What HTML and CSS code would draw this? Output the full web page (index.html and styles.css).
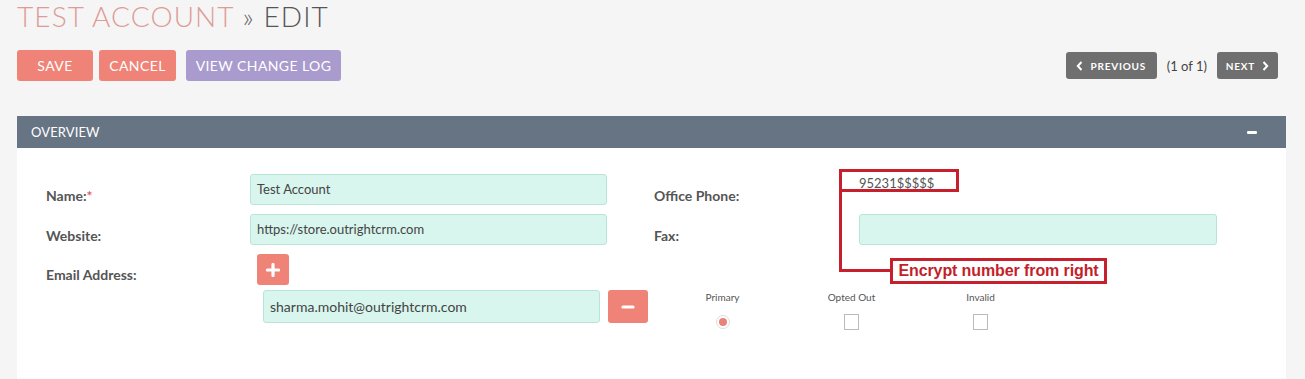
FILE: index.html
```html
<!DOCTYPE html>
<html>
<head>
<meta charset="utf-8">
<link rel="stylesheet" href="styles.css">
</head>
<body>
<div class="page">
  <h1 class="title"><span class="title-module">TEST ACCOUNT</span> <span class="title-sep">»</span> <span class="title-action">EDIT</span></h1>
  <div class="action-bar">
    <div class="actions">
      <button class="btn btn-save">SAVE</button>
      <button class="btn btn-cancel">CANCEL</button>
      <button class="btn btn-log">VIEW CHANGE LOG</button>
    </div>
    <div class="pager">
      <button class="nav-btn nav-prev"><svg width="7" height="10" viewBox="0 0 7 10"><path d="M5.5 1 L1.8 5 L5.5 9" fill="none" stroke="#fff" stroke-width="2"/></svg>PREVIOUS</button>
      <span class="pager-count">(1 of 1)</span>
      <button class="nav-btn nav-next">NEXT<svg width="7" height="10" viewBox="0 0 7 10"><path d="M1.5 1 L5.2 5 L1.5 9" fill="none" stroke="#fff" stroke-width="2"/></svg></button>
    </div>
  </div>

  <div class="panel">
    <div class="panel-head">
      <span class="panel-title">OVERVIEW</span>
      <span class="panel-toggle"></span>
    </div>
    <div class="panel-body">
      <div class="form-grid">
        <div class="label">Name:<span class="req">*</span></div>
        <div class="field"><div class="input">Test Account</div></div>
        <div></div>
        <div class="label">Office Phone:</div>
        <div class="field phone-cell">
          <div class="phone-value">95231$$$$$</div>
          <div class="note-box"></div>
          <div class="note-line"></div>
          <div class="note-text">Encrypt number from right</div>
        </div>

        <div class="label">Website:</div>
        <div class="field"><div class="input">https://store.outrightcrm.com</div></div>
        <div></div>
        <div class="label">Fax:</div>
        <div class="field"><div class="input"></div></div>

        <div class="label label-email">Email Address:</div>
        <div class="email-block">
          <button class="icon-btn add-btn"><svg width="14" height="14" viewBox="0 0 14 14"><path d="M7 1.5 V12.5 M1.5 7 H12.5" stroke="#fff" stroke-width="3.2" stroke-linecap="round"/></svg></button>
          <div class="email-line">
            <div class="input email-input">sharma.mohit@outrightcrm.com</div>
            <button class="icon-btn remove-btn"><svg width="14" height="6" viewBox="0 0 14 6"><path d="M2 3 H12" stroke="#fff" stroke-width="3.2" stroke-linecap="round"/></svg></button>
            <div class="flag flag-first">
              <div class="flag-label">Primary</div>
              <span class="radio"><span class="radio-dot"></span></span>
            </div>
            <div class="flag">
              <div class="flag-label">Opted Out</div>
              <span class="check"></span>
            </div>
            <div class="flag">
              <div class="flag-label">Invalid</div>
              <span class="check"></span>
            </div>
          </div>
        </div>
      </div>
    </div>
  </div>
</div>
</body>
</html>
```

FILE: styles.css
```css
html, body {
  margin: 0;
  padding: 0;
}
body {
  background: #f5f5f5;
  font-family: Lato, "Open Sans", sans-serif;
  color: #555;
  height: 379px;
  overflow: hidden;
}
.page {
  padding: 0 19px 0 17px;
}
.title {
  margin: 0;
  font-size: 28px;
  font-weight: 300;
  line-height: 33px;
  letter-spacing: 1.1px;
  white-space: nowrap;
}
.title-module { color: #de9c97; }
.title-sep { color: #666; }
.title-action { color: #555; }

.action-bar {
  display: flex;
  justify-content: space-between;
  align-items: center;
  margin-top: 17px;
  height: 31px;
}
.actions {
  display: flex;
  align-items: center;
}
.btn {
  border: none;
  height: 31px;
  border-radius: 3px;
  color: #fff;
  font-family: Lato, sans-serif;
  font-size: 14px;
  font-weight: 400;
  letter-spacing: 0.4px;
  padding: 0;
  cursor: pointer;
}
.btn-save { background: #f08377; width: 76px; }
.btn-cancel { background: #f08377; width: 77px; margin-left: 6px; }
.btn-log { background: #a99bcd; width: 155px; margin-left: 10px; }

.pager {
  display: flex;
  align-items: center;
  margin-right: 8px;
}
.nav-btn {
  border: none;
  background: #6f6f6f;
  color: #fff;
  height: 27px;
  border-radius: 3px;
  font-family: Lato, sans-serif;
  font-size: 10px;
  font-weight: 700;
  letter-spacing: 0.8px;
  display: flex;
  align-items: center;
  justify-content: center;
  gap: 7px;
  padding: 0;
}
.nav-prev { width: 91px; }
.nav-next { width: 61px; }
.pager-count {
  font-size: 13px;
  color: #444;
  margin: 0 10px;
  white-space: nowrap;
}

.panel {
  margin-top: 35px;
  width: 1269px;
}
.panel-head {
  background: #677483;
  height: 32px;
  display: flex;
  align-items: center;
  justify-content: space-between;
  padding: 0 29px 0 14px;
}
.panel-title {
  color: #fff;
  font-size: 13px;
  letter-spacing: 0.1px;
}
.panel-toggle {
  display: block;
  width: 10px;
  height: 3px;
  background: #fff;
  border-radius: 1px;
}
.panel-body {
  background: #fff;
  height: 240px;
  padding: 26px 0 0 29px;
  box-sizing: border-box;
}
.form-grid {
  display: grid;
  grid-template-columns: 204px 357px 47px 205px 358px;
  grid-auto-rows: auto;
  row-gap: 9px;
}
.label {
  font-size: 14px;
  font-weight: 700;
  color: #555;
  padding-top: 13px;
  line-height: 17px;
}
.req { color: #e0606a; }
.input {
  box-sizing: border-box;
  height: 31px;
  background: #d8f5ee;
  border: 1px solid #b8e5da;
  border-radius: 3px;
  font-size: 13px;
  color: #444;
  line-height: 29px;
  padding: 0 6px;
}
.phone-cell {
  position: relative;
}
.phone-value {
  font-size: 13px;
  color: #555;
  line-height: 18px;
}
.note-box {
  position: absolute;
  left: -20px;
  top: -5px;
  width: 120px;
  height: 23px;
  border: 3px solid #c81f2c;
  box-sizing: border-box;
}
.note-line {
  position: absolute;
  left: -20px;
  top: 18px;
  width: 51px;
  height: 80px;
  border-left: 3px solid #c81f2c;
  border-bottom: 3px solid #c81f2c;
  box-sizing: border-box;
}
.note-text {
  position: absolute;
  left: 31px;
  top: 84px;
  width: 217px;
  height: 26px;
  border: 3px solid #c81f2c;
  box-sizing: border-box;
  background: #fff;
  color: #c41e2b;
  font-family: "Liberation Sans", Arial, sans-serif;
  font-weight: 700;
  font-size: 16px;
  letter-spacing: -0.1px;
  line-height: 20px;
  text-align: center;
  white-space: nowrap;
}
.label-email {
  padding-top: 12px;
}
.email-block {
  grid-column: 2 / 6;
}
.icon-btn {
  border: none;
  background: #f08377;
  border-radius: 3px;
  display: flex;
  align-items: center;
  justify-content: center;
  padding: 0;
}
.add-btn {
  width: 32px;
  height: 31px;
  margin-left: 7px;
}
.email-line {
  display: flex;
  align-items: flex-start;
  margin-top: 5px;
}
.email-input {
  width: 337px;
  height: 33px;
  line-height: 31px;
  margin-left: 13px;
  font-size: 14px;
}
.remove-btn {
  width: 40px;
  height: 33px;
  margin-left: 8px;
}
.flag {
  width: 129px;
  display: flex;
  flex-direction: column;
  align-items: center;
}
.flag-first { margin-left: 10px; }
.flag-label {
  font-size: 10px;
  color: #555;
  line-height: 12px;
  margin-top: 1px;
}
.radio {
  margin-top: 12px;
  width: 14px;
  height: 14px;
  border-radius: 50%;
  border: 1px solid #ddd;
  box-sizing: border-box;
  display: flex;
  align-items: center;
  justify-content: center;
}
.radio-dot {
  width: 8px;
  height: 8px;
  border-radius: 50%;
  background: #e8837b;
}
.check {
  margin-top: 11px;
  width: 15px;
  height: 16px;
  border: 1px solid #bbb;
  box-sizing: border-box;
  background: #fff;
}
```
